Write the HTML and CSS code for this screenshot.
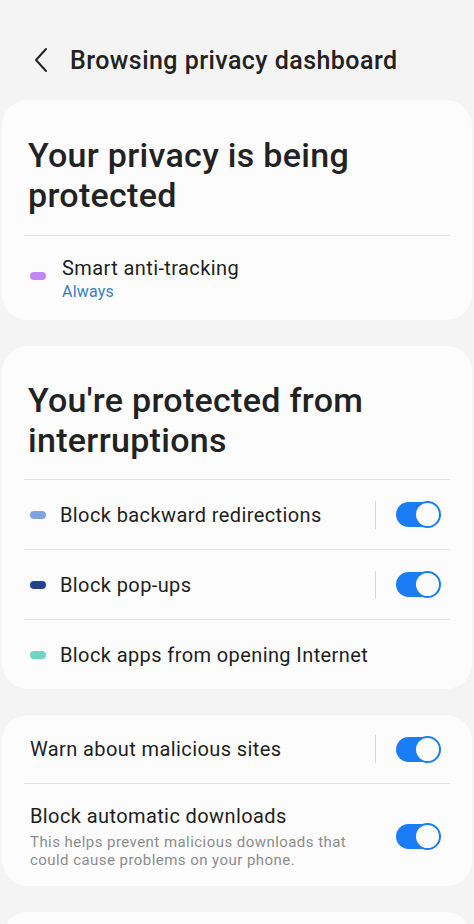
FILE: index.html
```html
<!DOCTYPE html>
<html lang="en">
<head>
<meta charset="utf-8">
<title>Browsing privacy dashboard</title>
<link rel="stylesheet" href="styles.css">
</head>
<body>
<div class="screen">
  <header class="appbar">
    <svg class="back" width="16" height="26" viewBox="0 0 16 26"><path d="M13 2 L3 13 L13 24" fill="none" stroke="#222" stroke-width="2" stroke-linecap="round" stroke-linejoin="round"/></svg>
    <h1 class="title">Browsing privacy dashboard</h1>
  </header>

  <section class="card card-status">
    <h2 class="heading">Your privacy is being protected</h2>
    <div class="divider"></div>
    <div class="row row-two">
      <span class="dot dot-purple"></span>
      <div class="texts">
        <div class="label">Smart anti-tracking</div>
        <div class="sub-blue">Always</div>
      </div>
    </div>
  </section>

  <section class="card card-interrupt">
    <h2 class="heading">You're protected from interruptions</h2>
    <div class="divider"></div>
    <div class="row row-single">
      <span class="dot dot-lightblue"></span>
      <div class="label grow">Block backward redirections</div>
      <span class="vsep"></span>
      <span class="toggle"><span class="thumb"></span></span>
    </div>
    <div class="divider"></div>
    <div class="row row-single">
      <span class="dot dot-navy"></span>
      <div class="label grow">Block pop-ups</div>
      <span class="vsep"></span>
      <span class="toggle"><span class="thumb"></span></span>
    </div>
    <div class="divider"></div>
    <div class="row row-single">
      <span class="dot dot-teal"></span>
      <div class="label grow">Block apps from opening Internet</div>
    </div>
  </section>

  <section class="card card-settings">
    <div class="row row-single">
      <div class="label grow">Warn about malicious sites</div>
      <span class="vsep"></span>
      <span class="toggle"><span class="thumb"></span></span>
    </div>
    <div class="divider"></div>
    <div class="row row-desc">
      <div class="texts grow">
        <div class="label">Block automatic downloads</div>
        <div class="desc">This helps prevent malicious downloads that could cause problems on your phone.</div>
      </div>
      <span class="toggle"><span class="thumb"></span></span>
    </div>
  </section>

  <section class="card card-more"></section>
</div>
</body>
</html>
```

FILE: styles.css
```css
* { box-sizing: border-box; }
html, body { margin: 0; padding: 0; }
body {
  background: #f4f4f4;
  font-family: Roboto, "Noto Sans", Arial, sans-serif;
  color: #1e1e1e;
  width: 474px;
  height: 924px;
  overflow: hidden;
}
.screen { display: flex; flex-direction: column; gap: 26px; padding: 0 2px; }
.appbar {
  display: flex;
  align-items: center;
  height: 100px;
  padding: 20px 0 0 31px;
  margin-bottom: -26px;
}
.back { flex: none; }
.title {
  margin: 0 0 0 21px;
  font-size: 25px;
  font-weight: 500;
  color: #222;
  letter-spacing: 0.45px;
}
.card {
  background: #fcfcfc;
  border-radius: 26px;
  padding: 0 22px;
}
.heading {
  margin: 0;
  font-size: 34px;
  line-height: 40px;
  font-weight: 500;
  color: #222;
  padding: 0 4px;
  letter-spacing: 0.3px;
}
.card-status { padding-top: 35px; padding-bottom: 16px; }
.card-status .heading { margin-bottom: 20px; }
.card-interrupt { padding-top: 34px; }
.card-interrupt .heading { margin-bottom: 19px; }
.divider { height: 1px; background: #e4e4e4; }
.row { display: flex; align-items: center; padding-left: 6px; }
.row-two { padding-top: 20px; align-items: flex-start; }
.row-two .dot { margin-top: 16px; }
.row-single { height: 68px; }
.card-interrupt .row-single { height: 69px; }
.row-desc { padding-top: 20px; padding-bottom: 17px; }
.dot {
  flex: none;
  width: 16px;
  height: 8px;
  border-radius: 4px;
  margin-right: 14px;
}
.dot-purple { background: #c384f4; margin-right: 16px; }
.dot-lightblue { background: #7ea4e0; }
.dot-navy { background: #23428f; }
.dot-teal { background: #6fd6c5; }
.grow { flex: 1; min-width: 0; }
.label { font-size: 20px; line-height: 24px; color: #1e1e1e; letter-spacing: 0.4px; }
.sub-blue { font-size: 16px; line-height: 24px; color: #3a7ec2; letter-spacing: 0.2px; }
.desc { font-size: 15px; line-height: 18px; color: #8c8c8c; margin-top: 5px; padding-right: 10px; letter-spacing: 0.45px; }
.vsep { flex: none; width: 1px; height: 28px; background: #d8d8d8; margin-right: 20px; }
.toggle {
  flex: none;
  position: relative;
  width: 44px;
  height: 25px;
  border-radius: 13px;
  background: #1b7df6;
  margin-right: 10px;
}
.thumb {
  position: absolute;
  right: -1px;
  top: -1px;
  width: 27px;
  height: 27px;
  border-radius: 50%;
  background: #fcfcfc;
  border: 2px solid #1b7df6;
}
.card-more { height: 80px; }
```
